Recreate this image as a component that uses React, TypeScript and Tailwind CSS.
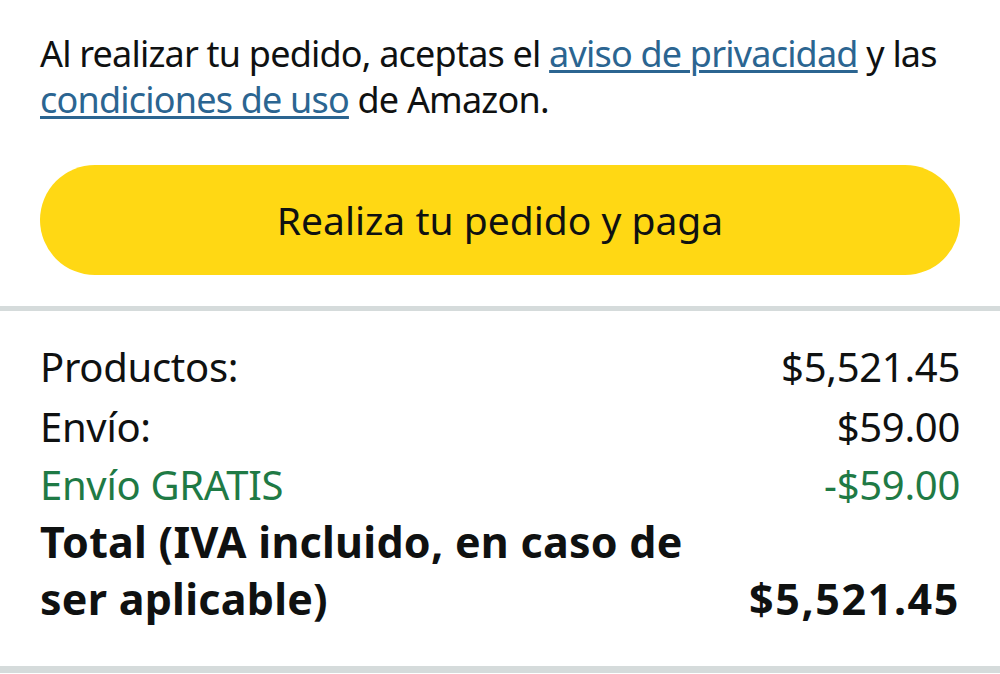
export default function App(): JSX.Element {
  const rows = [
    { key: "productos", label: "Productos:", value: "$5,521.45", green: false, h: "h-[60px]" },
    { key: "envio", label: "Envío:", value: "$59.00", green: false, h: "h-[60px]" },
    { key: "gratis", label: "Envío GRATIS", value: "-$59.00", green: true, h: "h-[56px]" },
  ];

  return (
    <div className="min-h-[674px] w-full bg-white font-['Noto_Sans',sans-serif] text-[#0F1111]">
      <section className="px-10 pt-[31px]">
        <p className="text-[36px] leading-[46px] tracking-[-0.8px]">
          Al realizar tu pedido, aceptas el{" "}
          <a href="#" className="text-[#2B6591] underline decoration-[3px] underline-offset-[3px]">
            aviso de privacidad
          </a>{" "}
          y las{" "}
          <a href="#" className="text-[#2B6591] underline decoration-[3px] underline-offset-[3px]">
            condiciones de uso
          </a>{" "}
          de Amazon.
        </p>
        <button
          type="button"
          className="mt-[42px] flex h-[110px] w-full items-center justify-center rounded-full bg-[#FFD814] text-[39px] text-[#0F1111]"
        >
          Realiza tu pedido y paga
        </button>
      </section>

      <div className="mt-[31px] h-[5px] w-full bg-[#D5DBDB]" />

      <section className="px-10 pt-[26px] pb-[39px] text-[40px] tracking-[-0.3px]">
        {rows.map((r) => (
          <div
            key={r.key}
            className={`flex items-center justify-between leading-[60px] ${r.h} ${r.green ? "text-[#1F7A45]" : ""}`}
          >
            <span>{r.label}</span>
            <span>{r.value}</span>
          </div>
        ))}
        <div className="flex items-end justify-between text-[43px] font-bold leading-[57px]">
          <span className="max-w-[690px] tracking-[0.25px]">Total (IVA incluido, en caso de ser aplicable)</span>
          <span className="tracking-[1.6px]">$5,521.45</span>
        </div>
      </section>

      <div className="h-[7px] w-full bg-[#D5DBDB]" />
    </div>
  );
}
